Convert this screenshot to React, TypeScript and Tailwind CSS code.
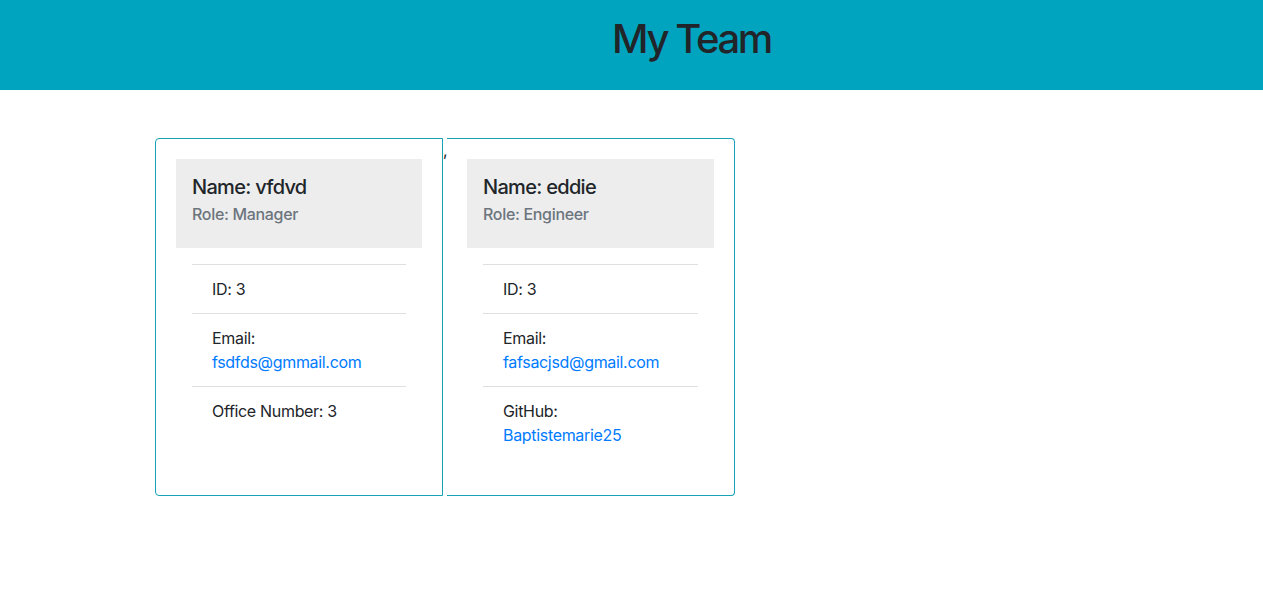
import React from 'react';

interface Detail {
  label: string;
  value: string;
  link?: boolean;
}

interface Member {
  name: string;
  role: string;
  details: Detail[];
}

const team: Member[] = [
  {
    name: 'vfdvd',
    role: 'Manager',
    details: [
      { label: 'ID', value: '3' },
      { label: 'Email', value: 'fsdfds@gmmail.com', link: true },
      { label: 'Office Number', value: '3' },
    ],
  },
  {
    name: 'eddie',
    role: 'Engineer',
    details: [
      { label: 'ID', value: '3' },
      { label: 'Email', value: 'fafsacjsd@gmail.com', link: true },
      { label: 'GitHub', value: 'Baptistemarie25', link: true },
    ],
  },
];

const MemberCard: React.FC<{ member: Member; first: boolean }> = ({ member, first }) => {
  return (
    <div
      className={
        first
          ? 'w-[288px] border border-[#17a2b8] rounded-l-[4px] p-5'
          : 'w-[288px] border border-l-0 border-[#17a2b8] rounded-r-[4px] p-5'
      }
    >
      <div className="bg-[#ededed] px-4 pt-4 h-[89px]">
        <h5 className="text-[20px] leading-[24px] font-medium tracking-[-0.035em] mb-3">Name: {member.name}</h5>
        <h6 className="text-[16px] leading-[19px] font-medium tracking-[-0.02em] text-[#6c757d] -mt-[6px]">
          Role: {member.role}
        </h6>
      </div>
      <div className="p-4">
        <ul>
          {member.details.map((d) => (
            <li
              key={d.label}
              className="border-t border-[#dfdfdf] px-5 py-3 text-[16px] leading-6 tracking-[-0.02em]"
            >
              {d.link ? (
                <>
                  {d.label}:
                  <br />
                  <a href="#" className="text-[#007bff]">
                    {d.value}
                  </a>
                </>
              ) : (
                <>
                  {d.label}: {d.value}
                </>
              )}
            </li>
          ))}
        </ul>
      </div>
    </div>
  );
};

export default function App() {
  return (
    <div className="min-h-screen bg-white font-['Inter',sans-serif] text-[#212529]">
      <header className="h-[90px] bg-[#01a4bf] flex justify-center pl-[120px] pt-[15px]">
        <h1 className="text-[40px] leading-[48px] font-medium tracking-[-0.06em]">My Team</h1>
      </header>
      <main className="mt-12 ml-[155px] flex w-[580px]">
        <MemberCard member={team[0]} first />
        <span className="w-[4px] text-[16px] leading-6">,</span>
        <MemberCard member={team[1]} first={false} />
      </main>
    </div>
  );
}
